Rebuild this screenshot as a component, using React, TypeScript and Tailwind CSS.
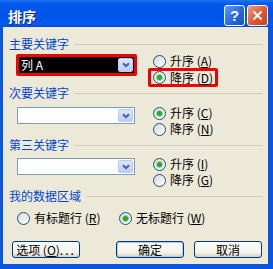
import React from "react";

const FONT = "font-['Noto_Sans_CJK_SC','Noto_Sans',sans-serif]";

function Chevron() {
  return (
    <svg width="8" height="6" viewBox="0 0 8 6">
      <path d="M1 1.2 L4 4.2 L7 1.2" stroke="#4D6185" strokeWidth="2" fill="none" />
    </svg>
  );
}

function DropBtn() {
  return (
    <div className="w-[15px] h-full rounded-[2px] border border-[#BACCF4] bg-[linear-gradient(#DCE6FD,#B9CCF7)] flex items-center justify-center">
      <Chevron />
    </div>
  );
}

function Combo() {
  return (
    <div className="w-[118px] h-[17px] border border-[#7F9DB9] bg-white flex justify-end p-[1px]">
      <DropBtn />
    </div>
  );
}

function Radio({
  checked,
  label,
  acc,
  h = "h-[16px]",
}: {
  checked?: boolean;
  label: string;
  acc: string;
  h?: string;
}) {
  return (
    <div className={`flex items-center ${h}`}>
      <span className="w-[13px] h-[13px] shrink-0 rounded-full border border-[#1C5180] bg-[linear-gradient(135deg,#D8D8D2,#FFFFFF)] flex items-center justify-center">
        {checked && (
          <span className="w-[5px] h-[5px] rounded-full bg-[#2BA52B] shadow-[0_0_0_1px_#9BDA9B]" />
        )}
      </span>
      <span className="ml-[4px] text-[12px] leading-[14px] text-black whitespace-pre">
        {label} (<u>{acc}</u>)
      </span>
    </div>
  );
}

function Header({ text, cls }: { text: string; cls: string }) {
  return (
    <div className={`flex items-center h-[14px] pl-[6px] pr-[5px] ${cls}`}>
      <span className="text-[12px] leading-[14px] text-[#0046D5] whitespace-nowrap">{text}</span>
      <div className="flex-1 h-px bg-[#D0D0BF] ml-[5px]" />
    </div>
  );
}

function Button({ children, def }: { children: React.ReactNode; def?: boolean }) {
  return (
    <div
      className={`w-[68px] h-[17px] rounded-[3px] border border-[#003C74] bg-[linear-gradient(#FFFFFF,#F3F2EC_70%,#D6D0C5)] flex items-center justify-center text-[12px] leading-[14px] text-black whitespace-pre ${
        def ? "shadow-[inset_0_0_0_1px_#B2C8F0]" : ""
      }`}
    >
      {children}
    </div>
  );
}

export default function App() {
  return (
    <div className={`w-[273px] h-[269px] flex flex-col bg-[#0A56E2] ${FONT}`}>
      <div className="h-[27px] shrink-0 flex items-start bg-[linear-gradient(#1F74F0,#0058EE_15%,#0054E8_60%,#005CF2_90%,#0048D8)]">
        <div className="pl-[8px] pt-[8px] text-[14px] leading-[16px] font-bold text-white [text-shadow:1px_1px_#0A2A8A]">
          排序
        </div>
        <div className="flex-1" />
        <div className="flex gap-[2px] mt-[5px] pr-[5px]">
          <div className="w-[21px] h-[21px] rounded-[3px] border border-white bg-[linear-gradient(135deg,#5B9BFF,#2663E0_60%,#1C4FCB)] flex items-center justify-center text-white font-bold text-[15px] leading-none font-['Liberation_Sans',sans-serif]">
            ?
          </div>
          <div className="w-[21px] h-[21px] rounded-[3px] border border-white bg-[linear-gradient(135deg,#F39A7A,#E2572F_55%,#C8401D)] flex items-center justify-center">
            <svg width="11" height="11" viewBox="0 0 11 11">
              <path d="M1.5 1.5 L9.5 9.5 M9.5 1.5 L1.5 9.5" stroke="#FFFFFF" strokeWidth="2" />
            </svg>
          </div>
        </div>
      </div>
      <div className="flex-1 pl-[3px] pr-[5px] pb-[5px] flex">
        <div className="flex-1 bg-[#ECE9D8] flex flex-col">
          <Header text="主要关键字" cls="mt-[10px]" />
          <div className="flex h-[32px] mt-[3px]">
            <div className="w-[145px] shrink-0 pl-[13px]">
              <div className="w-[121px] h-[22px] border-[3px] border-[#F00000] rounded-[2px] bg-black flex py-[1px] pr-[1px]">
                <div className="flex-1 flex items-center pl-[2px] text-white text-[12px] leading-[14px] whitespace-pre">
                  列 A
                </div>
                <DropBtn />
              </div>
            </div>
            <div className="flex flex-col">
              <div className="pl-[5px]">
                <Radio label="升序" acc="A" h="h-[14px]" />
              </div>
              <div className="w-[70px] h-[19px] border-[3px] border-[#F00000] rounded-[2px] pl-[2px] flex items-center">
                <Radio checked label="降序" acc="D" h="h-[13px]" />
              </div>
            </div>
          </div>
          <Header text="次要关键字" cls="" />
          <div className="flex h-[32px] mt-[5px]">
            <div className="w-[145px] shrink-0 pl-[14px] pt-[2px]">
              <Combo />
            </div>
            <div className="flex flex-col pl-[5px]">
              <Radio checked label="升序" acc="C" />
              <Radio label="降序" acc="N" />
            </div>
          </div>
          <Header text="第三关键字" cls="mt-[1px]" />
          <div className="flex h-[32px] mt-[4px]">
            <div className="w-[145px] shrink-0 pl-[14px] pt-[2px]">
              <Combo />
            </div>
            <div className="flex flex-col pl-[5px]">
              <Radio checked label="升序" acc="I" />
              <Radio label="降序" acc="G" />
            </div>
          </div>
          <Header text="我的数据区域" cls="mt-[1px]" />
          <div className="flex mt-[7px] pl-[14px]">
            <div className="w-[102px] shrink-0">
              <Radio label="有标题行" acc="R" />
            </div>
            <Radio checked label="无标题行" acc="W" />
          </div>
          <div className="flex mt-[15px] pl-[9px]">
            <Button>
              选项 (<u>O</u>)<span className="tracking-[2px]">...</span>
            </Button>
            <div className="ml-[36px]">
              <Button def>确定</Button>
            </div>
            <div className="ml-[10px]">
              <Button>取消</Button>
            </div>
          </div>
        </div>
      </div>
    </div>
  );
}
